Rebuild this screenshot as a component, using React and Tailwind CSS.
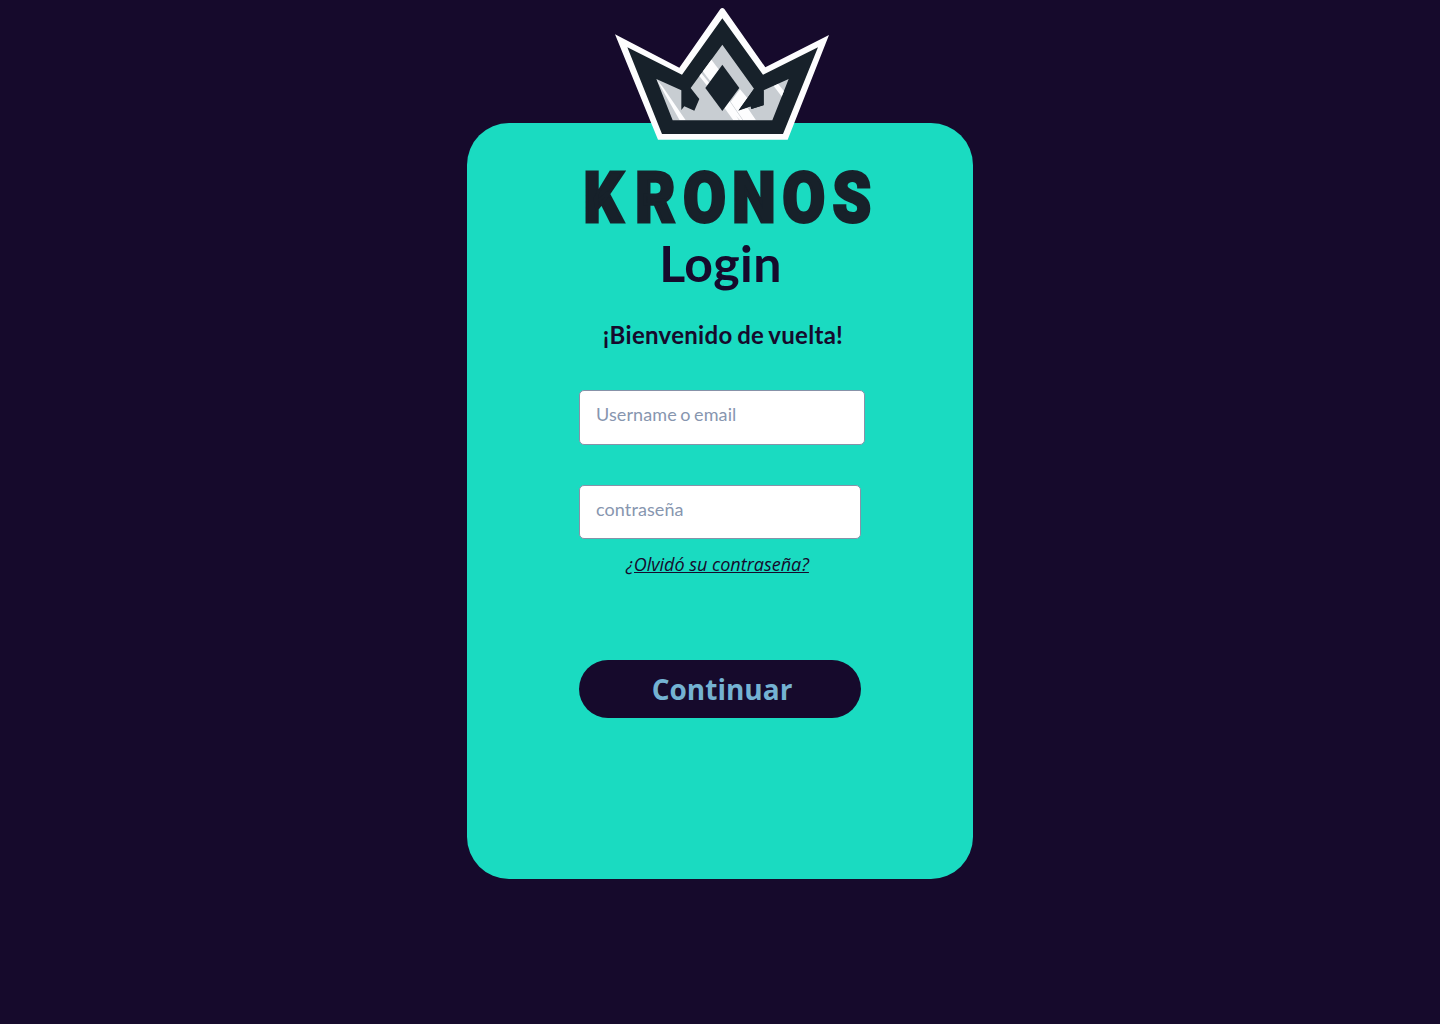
import React from "react";

function Crown() {
  return (
    <svg viewBox="0 0 705 450" className="h-[150px] w-[235px] shrink-0" aria-hidden="true">
      <defs>
        <clipPath id="gem">
          <path d="M352 134 L447 266 L402 330 L437 319 L476 316 V271 L551 237 L502 361 H203 L154 237 L229 271 V330 L238 319 L268 332 L283 297 L257 264 Z" />
        </clipPath>
      </defs>
      <path fill="#fdfdfe" d="M30 103 L223 203 L346 27 Q352 21 358 27 L481 202 L672 105 L548 419 H159 Z" />
      <path fill="#17212a" d="M67 142 L231 224 L352 55 L474 224 L639 142 L534 402 H171 Z" />
      <path fill="#c8cdd2" d="M154 237 L229 271 V330 L238 319 L268 332 L283 297 L257 264 L352 134 L447 266 L402 330 L437 319 L439 327 L476 315 V271 L551 237 L502 361 H203 Z" />
      <g clipPath="url(#gem)" fill="#fdfdfe">
        <path d="M317 176 L342 209 L316 244 L292 212 Z" />
        <path d="M288 218 L313 249 L307 258 L281 226 Z" />
        <path d="M154 237 L174 262 L242 361 H224 Z" />
        <path d="M519 251 L542 280 L533 293 L506 258 Z" />
        <path d="M373 302 L413 361 H405 L364 317 Z" />
        <path d="M358 323 L371 311 L402 361 H385 Z" />
        <path d="M405 268 L427 294 L401 330 L428 324 L453 361 H415 L377 305 Z" />
      </g>
      <path fill="#17212a" d="M352 194 L403 264 L352 333 L301 264 Z" />
      <path fill="#17212a" d="M447 266 L476 271 V316 L439 327 L437 319 L400 332 Z" />
    </svg>
  );
}

function Wordmark() {
  return (
    <svg viewBox="0 0 300 86" className="h-[86px] w-[300px] shrink-0 overflow-visible">
      <text
        transform="scale(0.88 1)"
        x="2.8 61.6 116.2 171.8 228.9 285.7"
        y="72.2"
        fill="#17212a"
        stroke="#17212a"
        strokeWidth="3"
        className="font-['Roboto',sans-serif] text-[70px] font-black"
      >
        KRONOS
      </text>
    </svg>
  );
}

export default function App() {
  return (
    <main className="flex h-[1024px] w-full flex-col items-center overflow-hidden bg-[#160a2c] text-[#160a2c]">
      <section className="mt-[123px] flex h-[756px] w-[506px] flex-col items-start rounded-[42px] bg-[#1adbc1]">
        <div className="-mt-[123px] ml-[138px] h-[150px]">
          <Crown />
        </div>
        <div className="ml-[114px] h-[86px]">
          <Wordmark />
        </div>
        <h1 className="-mt-[3px] w-full pl-px text-center font-['Lato',sans-serif] text-[50px] leading-[60px] font-bold tracking-[0.4px]">Login</h1>
        <h2 className="mt-[27px] w-full pl-[6px] text-center font-['Lato',sans-serif] text-[24px] leading-[30px] font-bold tracking-[0.3px] [word-spacing:-1.5px]">¡Bienvenido de vuelta!</h2>
        <input
          placeholder="Username o email"
          className="mt-[40px] ml-[112px] h-[55px] w-[286px] rounded-[5px] border border-[#8792a8] bg-white px-4 pb-[7px] font-['Lato',sans-serif] text-[18px] tracking-[0.1px] [word-spacing:-1.2px] placeholder:text-[#8796af]"
        />
        <input
          placeholder="contraseña"
          className="mt-[40px] ml-[112px] h-[54px] w-[282px] rounded-[5px] border border-[#8792a8] bg-white px-4 pb-[7px] font-['Lato',sans-serif] text-[18px] tracking-[0.1px] placeholder:text-[#8796af]"
        />
        <a href="#" className="mt-[13px] ml-[159px] font-['Open_Sans',sans-serif] text-[18px] leading-[25px] italic underline">
          ¿Olvidó su contraseña?
        </a>
        <button className="mt-[83px] ml-[112px] h-[58px] w-[282px] rounded-full bg-[#160a2c] pl-[4px] font-['Open_Sans',sans-serif] text-[28px] leading-[38px] font-bold text-[#74b2d2]">
          Continuar
        </button>
      </section>
    </main>
  );
}
